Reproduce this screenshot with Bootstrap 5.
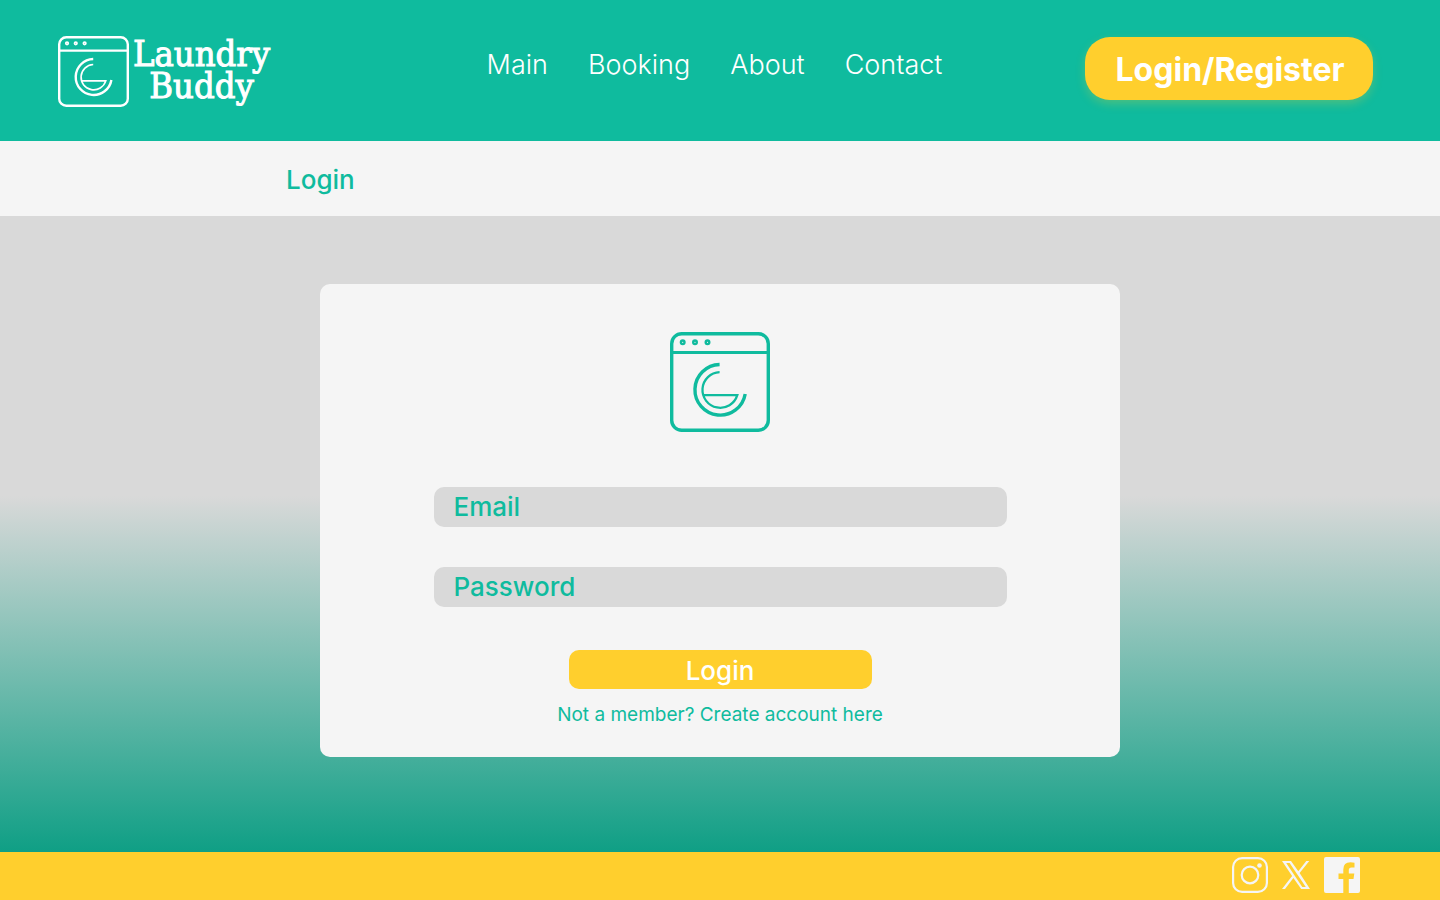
<!DOCTYPE html>
<html lang="en">
<head>
<meta charset="utf-8">
<meta name="viewport" content="width=device-width, initial-scale=1">
<title>Laundry Buddy – Login</title>
<link rel="stylesheet" href="https://cdn.jsdelivr.net/npm/bootstrap@5.3.0/dist/css/bootstrap.min.css">
<style>
:root { --teal: #0fbb9e; --sun: #ffcf2d; --paper: #f5f5f5; --fog: #d9d9d9; }
body { font-family: Inter, sans-serif; background: var(--paper); }
a { text-decoration: none; }
.site-header { background: var(--teal); padding: 36px 64px 34px 58px; }
.brand { color: #fff; font: 400 36px/32px "DejaVu Serif Condensed", "DejaVu Serif", serif; gap: 4px; width: 220px; -webkit-text-stroke: 1px #fff; }
.brand svg { width: 71px; height: 71px; flex: none; }
.brand-name { padding-top: 2px; }
.main-menu { gap: 40px; padding-top: 11px; margin-left: 66px; }
.main-menu a { color: #fff; font-size: 27px; line-height: 36px; font-weight: 300; }
.btn-account { --bs-btn-color: #fff; --bs-btn-bg: var(--sun); --bs-btn-hover-color: #fff; --bs-btn-hover-bg: #f2c01a; width: 288px; height: 63px; padding: 2px 0 0 2px; border: 0; border-radius: 25px; font-size: 32px; font-weight: 700; box-shadow: 0 4px 10px rgba(255, 207, 45, .25); margin: 1px 3px 0 0; }
.crumb { min-height: 75px; padding: 3px 16px 0 calc(20% - 2px); color: var(--teal); }
.crumb h1 { font-size: 26px; font-weight: 500; }
.stage { background: linear-gradient(var(--fog) 44%, #0f9f85); padding: 68px 16px 95px; }
.login-box { max-width: 800px; background: var(--paper); border-radius: 10px; padding: 48px 16px 30px; }
.login-box form { max-width: 573px; margin-top: 55px; }
.washer { display: block; width: 100px; height: 100px; color: var(--teal); }
.field { height: 40px; padding: 0 20px; margin-bottom: 40px; border: 0; border-radius: 10px; background: var(--fog); color: var(--teal); font-size: 26px; line-height: 40px; font-weight: 500; }
.field::placeholder { color: var(--teal); opacity: 1; }
.field:focus { background: var(--fog); color: var(--teal); }
.btn-login { --bs-btn-color: #fff; --bs-btn-bg: var(--sun); --bs-btn-hover-color: #fff; --bs-btn-hover-bg: #f2c01a; display: block; width: 303px; height: 39px; margin: 43px auto 14px; padding: 2px 0 0; border: 0; border-radius: 10px; font-size: 26px; line-height: 36px; font-weight: 500; }
.join { color: var(--teal); font-size: 19px; line-height: 24px; }
.site-footer { background: var(--sun); height: 48px; padding: 0 80px 2px; gap: 14px; color: var(--paper); }
.site-footer a { color: inherit; }
.site-footer svg { display: block; }
</style>
</head>
<body class="d-flex flex-column min-vh-100">
<svg class="d-none" aria-hidden="true">
  <symbol id="washer" viewBox="0 0 100 100">
    <g fill="none" stroke="currentColor">
      <rect x="1.7" y="1.7" width="96.6" height="96.6" rx="10" stroke-width="3.4"/>
      <path d="M2 20.5H98" stroke-width="3.2"/>
      <g stroke-width="2.4"><circle cx="12.7" cy="10.3" r="1.8"/><circle cx="25" cy="10.3" r="1.8"/><circle cx="37.5" cy="10.3" r="1.8"/></g>
      <path d="M49.6 32.5A25.3 25.3 0 1 0 75.2 62" stroke-width="3.4"/>
      <path d="M49.6 40.2A17.8 17.8 0 1 0 67.3 63.2H33.5" stroke-width="2.3"/>
    </g>
  </symbol>
</svg>

<header class="site-header d-flex flex-wrap justify-content-between align-items-start">
  <a class="brand d-flex" href="#" aria-label="Laundry Buddy">
    <svg><use href="#washer"/></svg>
    <span class="brand-name text-center">Laundry<br>Buddy</span>
  </a>
  <nav class="main-menu d-flex flex-wrap" aria-label="Main">
    <a href="#">Main</a><a href="#">Booking</a><a href="#">About</a><a href="#">Contact</a>
  </nav>
  <button class="btn btn-account" type="button">Login/Register</button>
</header>

<div class="crumb d-flex align-items-center"><h1 class="m-0">Login</h1></div>

<main class="stage flex-grow-1">
  <section class="login-box mx-auto text-center">
    <svg class="washer mx-auto"><use href="#washer"/></svg>
    <form class="mx-auto">
      <input class="form-control field" id="email" type="email" placeholder="Email" aria-label="Email">
      <input class="form-control field" id="password" type="password" placeholder="Password" aria-label="Password">
      <button class="btn btn-login" type="submit">Login</button>
    </form>
    <a class="join d-block" href="#">Not a member? Create account here</a>
  </section>
</main>

<footer class="site-footer d-flex align-items-center justify-content-end">
  <a href="#" aria-label="Instagram"><svg width="36" height="36" viewBox="0 0 36 36" fill="none" stroke="currentColor" stroke-width="2.2"><rect x="1.1" y="1.1" width="33.8" height="33.8" rx="9"/><circle cx="18" cy="18" r="8.3"/><circle cx="27.5" cy="8.5" r="2.3" fill="currentColor" stroke="none"/></svg></a>
  <a href="#" aria-label="X"><svg width="28" height="28" viewBox="0 0 28 28"><path fill="currentColor" fill-rule="evenodd" d="M0 0H9L16.3 10.2 24.3 0H27.3L17.6 11.9 28 28H19.2L11.4 16.9 3 28H0L10.1 15.1ZM4.2 2.1 20.3 25.9H23.8L7.6 2.1Z"/></svg></a>
  <a href="#" aria-label="Facebook"><svg width="36" height="36" viewBox="0 0 36 36"><path fill="currentColor" d="M2 0H34Q36 0 36 2V34Q36 36 34 36H24.8V22H29.5L30.3 16.5H24.8V13Q24.8 10.5 27.5 10.5H30.5V5.7Q19.3 3.5 19.3 12.5V16.5H14.5V22H19.3V36H2Q0 36 0 34V2Q0 0 2 0Z"/></svg></a>
</footer>
<script src="https://cdn.jsdelivr.net/npm/bootstrap@5.3.0/dist/js/bootstrap.bundle.min.js"></script>
</body>
</html>
